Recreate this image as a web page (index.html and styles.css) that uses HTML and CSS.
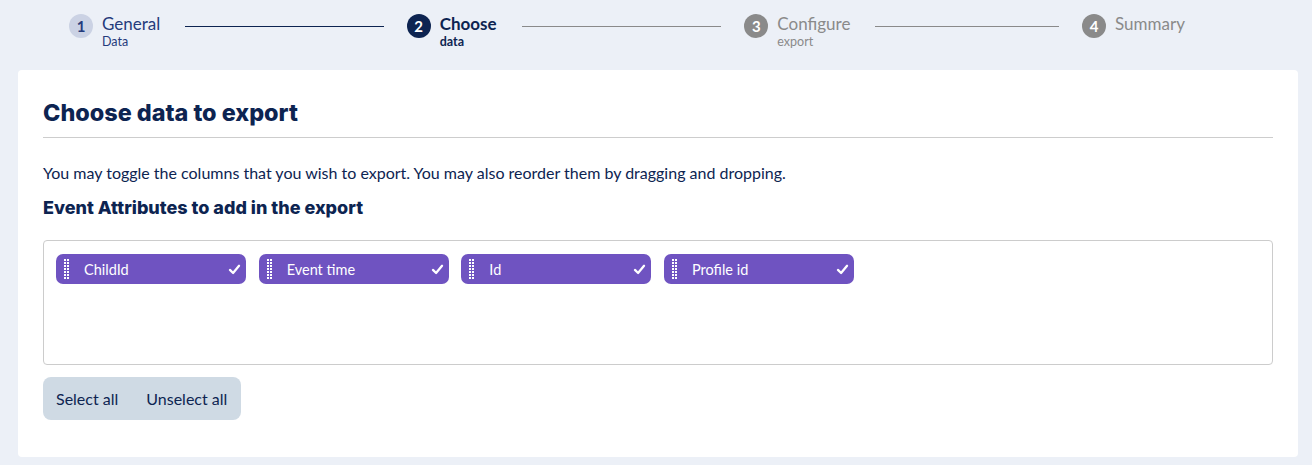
FILE: index.html
```html
<!DOCTYPE html>
<html>
<head>
<meta charset="utf-8">
<link rel="stylesheet" href="styles.css">
</head>
<body>
<div class="page">
  <div class="stepper">
    <div class="step done">
      <span class="circle">1</span>
      <span class="label"><span class="title">General</span><span class="sub">Data</span></span>
      <span class="line"></span>
    </div>
    <div class="step active">
      <span class="circle">2</span>
      <span class="label"><span class="title">Choose</span><span class="sub">data</span></span>
      <span class="line"></span>
    </div>
    <div class="step">
      <span class="circle">3</span>
      <span class="label"><span class="title">Configure</span><span class="sub">export</span></span>
      <span class="line"></span>
    </div>
    <div class="step last">
      <span class="circle">4</span>
      <span class="label"><span class="title">Summary</span></span>
    </div>
  </div>
  <div class="card">
    <h1 class="heading">Choose data to export</h1>
    <p class="desc">You may toggle the columns that you wish to export. You may also reorder them by dragging and dropping.</p>
    <h2 class="subheading">Event Attributes to add in the export</h2>
    <div class="chipbox">
      <div class="chip">
        <svg class="grip" viewBox="0 0 5 20"><g fill="#fff"><rect x="0" y="0" width="2" height="2"/><rect x="3" y="0" width="2" height="2"/><rect x="0" y="3" width="2" height="2"/><rect x="3" y="3" width="2" height="2"/><rect x="0" y="6" width="2" height="2"/><rect x="3" y="6" width="2" height="2"/><rect x="0" y="9" width="2" height="2"/><rect x="3" y="9" width="2" height="2"/><rect x="0" y="12" width="2" height="2"/><rect x="3" y="12" width="2" height="2"/><rect x="0" y="15" width="2" height="2"/><rect x="3" y="15" width="2" height="2"/><rect x="0" y="18" width="2" height="2"/><rect x="3" y="18" width="2" height="2"/></g></svg>
        <span class="chip-text">ChildId</span>
        <svg class="check" viewBox="0 0 12 12"><path d="M1.8 6.4 L4.7 9.2 L10.2 2.6" fill="none" stroke="#fff" stroke-width="2.1" stroke-linecap="round" stroke-linejoin="round"/></svg>
      </div>
      <div class="chip">
        <svg class="grip" viewBox="0 0 5 20"><g fill="#fff"><rect x="0" y="0" width="2" height="2"/><rect x="3" y="0" width="2" height="2"/><rect x="0" y="3" width="2" height="2"/><rect x="3" y="3" width="2" height="2"/><rect x="0" y="6" width="2" height="2"/><rect x="3" y="6" width="2" height="2"/><rect x="0" y="9" width="2" height="2"/><rect x="3" y="9" width="2" height="2"/><rect x="0" y="12" width="2" height="2"/><rect x="3" y="12" width="2" height="2"/><rect x="0" y="15" width="2" height="2"/><rect x="3" y="15" width="2" height="2"/><rect x="0" y="18" width="2" height="2"/><rect x="3" y="18" width="2" height="2"/></g></svg>
        <span class="chip-text">Event time</span>
        <svg class="check" viewBox="0 0 12 12"><path d="M1.8 6.4 L4.7 9.2 L10.2 2.6" fill="none" stroke="#fff" stroke-width="2.1" stroke-linecap="round" stroke-linejoin="round"/></svg>
      </div>
      <div class="chip">
        <svg class="grip" viewBox="0 0 5 20"><g fill="#fff"><rect x="0" y="0" width="2" height="2"/><rect x="3" y="0" width="2" height="2"/><rect x="0" y="3" width="2" height="2"/><rect x="3" y="3" width="2" height="2"/><rect x="0" y="6" width="2" height="2"/><rect x="3" y="6" width="2" height="2"/><rect x="0" y="9" width="2" height="2"/><rect x="3" y="9" width="2" height="2"/><rect x="0" y="12" width="2" height="2"/><rect x="3" y="12" width="2" height="2"/><rect x="0" y="15" width="2" height="2"/><rect x="3" y="15" width="2" height="2"/><rect x="0" y="18" width="2" height="2"/><rect x="3" y="18" width="2" height="2"/></g></svg>
        <span class="chip-text">Id</span>
        <svg class="check" viewBox="0 0 12 12"><path d="M1.8 6.4 L4.7 9.2 L10.2 2.6" fill="none" stroke="#fff" stroke-width="2.1" stroke-linecap="round" stroke-linejoin="round"/></svg>
      </div>
      <div class="chip">
        <svg class="grip" viewBox="0 0 5 20"><g fill="#fff"><rect x="0" y="0" width="2" height="2"/><rect x="3" y="0" width="2" height="2"/><rect x="0" y="3" width="2" height="2"/><rect x="3" y="3" width="2" height="2"/><rect x="0" y="6" width="2" height="2"/><rect x="3" y="6" width="2" height="2"/><rect x="0" y="9" width="2" height="2"/><rect x="3" y="9" width="2" height="2"/><rect x="0" y="12" width="2" height="2"/><rect x="3" y="12" width="2" height="2"/><rect x="0" y="15" width="2" height="2"/><rect x="3" y="15" width="2" height="2"/><rect x="0" y="18" width="2" height="2"/><rect x="3" y="18" width="2" height="2"/></g></svg>
        <span class="chip-text">Profile id</span>
        <svg class="check" viewBox="0 0 12 12"><path d="M1.8 6.4 L4.7 9.2 L10.2 2.6" fill="none" stroke="#fff" stroke-width="2.1" stroke-linecap="round" stroke-linejoin="round"/></svg>
      </div>
    </div>
    <div class="btngroup">
      <button class="btn">Select all</button>
      <button class="btn">Unselect all</button>
    </div>
  </div>
</div>
</body>
</html>
```

FILE: styles.css
```css
html, body {
  margin: 0;
  padding: 0;
}
body {
  background: #ecf0f7;
  font-family: "Lato", "Noto Sans", sans-serif;
  color: #0d2451;
  width: 1312px;
  height: 465px;
  overflow: hidden;
}
.page {
  padding: 0 14px 0 18px;
}
.stepper {
  display: flex;
  align-items: flex-start;
  height: 70px;
  box-sizing: border-box;
  padding: 14px 106px 0 51px;
}
.step {
  flex: 1 1 0;
  display: flex;
  align-items: flex-start;
}
.step.last {
  flex: 0 0 110px;
}
.circle {
  width: 24px;
  height: 24px;
  border-radius: 50%;
  background: #8a8a8a;
  color: #fff;
  font-weight: 700;
  font-size: 15px;
  display: flex;
  align-items: center;
  justify-content: center;
  flex: none;
}
.label {
  display: flex;
  flex-direction: column;
  margin-left: 9px;
  margin-top: 0;
}
.title {
  font-size: 17px;
  line-height: 20px;
  color: #8a8a8a;
}
.sub {
  font-size: 12.5px;
  line-height: 15px;
  color: #8a8a8a;
}
.line {
  flex: 1;
  height: 1px;
  background: #8a8a8a;
  margin: 12px 23px 0 25px;
}
.step.done .circle {
  background: #cbd2e4;
  color: #253b7c;
}
.step.done .title,
.step.done .sub {
  color: #253b7c;
}
.step.done .line {
  background: #0d2451;
}
.step.active .circle {
  background: #0d2451;
  color: #fff;
}
.step.active .title {
  color: #0d2451;
  font-weight: 700;
}
.step.active .sub {
  color: #0d2451;
  font-weight: 700;
}
.card {
  background: #fff;
  border-radius: 4px;
  height: 387px;
  box-sizing: border-box;
  padding: 27px 25px 0 25px;
}
.heading {
  margin: 0;
  font-family: "Inter", sans-serif;
  font-weight: 800;
  font-size: 23.4px;
  line-height: 32px;
  color: #0d2451;
  padding-bottom: 8px;
  border-bottom: 1px solid #cdcdcd;
}
.desc {
  margin: 25px 0 0 0;
  font-size: 16px;
  line-height: 20px;
  color: #0d2451;
}
.subheading {
  margin: 13px 0 0 0;
  font-family: "Inter", sans-serif;
  font-weight: 800;
  font-size: 18px;
  line-height: 24px;
  color: #0d2451;
}
.chipbox {
  margin-top: 20px;
  height: 125px;
  box-sizing: border-box;
  border: 1px solid #cccccc;
  border-radius: 4px;
  padding: 13px 12px;
  display: flex;
  align-items: flex-start;
  gap: 12.67px;
}
.chip {
  width: 190px;
  height: 30px;
  box-sizing: border-box;
  background: #6f53c1;
  border-radius: 7px;
  display: flex;
  align-items: center;
  padding: 0 5px 0 8px;
  color: #fff;
}
.grip {
  width: 5px;
  height: 20px;
  flex: none;
}
.chip-text {
  flex: 1;
  margin-left: 15px;
  font-size: 14.5px;
  color: #fff;
}
.check {
  width: 13px;
  height: 13px;
  flex: none;
}
.btngroup {
  margin-top: 12px;
  display: inline-flex;
  background: #cfdae4;
  border-radius: 8px;
  height: 43px;
  align-items: center;
  padding: 0 14px 0 13px;
  gap: 28px;
}
.btn {
  background: none;
  border: none;
  padding: 0;
  font-family: "Lato", "Noto Sans", sans-serif;
  font-size: 16px;
  color: #0d2451;
  cursor: pointer;
}
```
